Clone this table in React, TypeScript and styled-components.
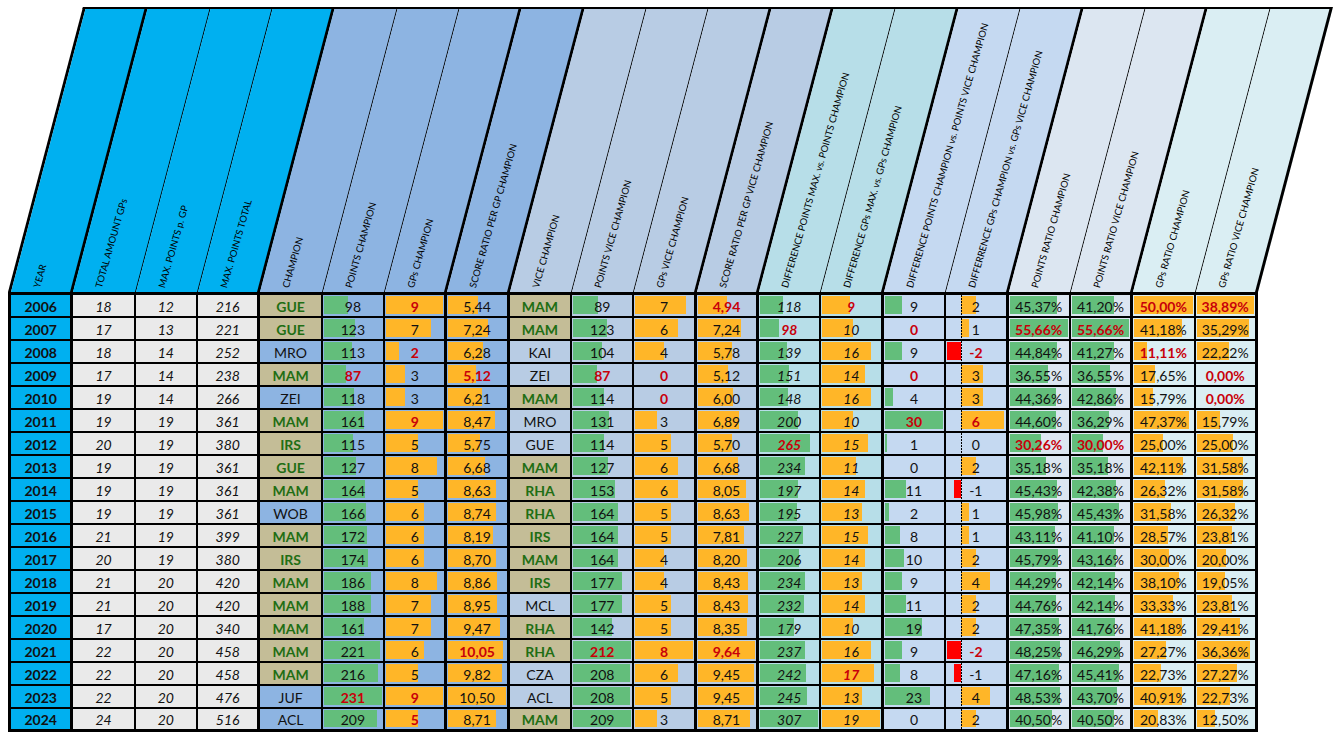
import React from 'react'
import styled, { createGlobalStyle } from 'styled-components'

type Bar = 'green' | 'orange' | 'axis'

interface Column {
  label: string
  head: string
  body: string
  thick?: boolean
  italic?: boolean
  bar?: Bar
}

const BLUE = '#00B0F0'
const CHAMP = '#8DB4E2'
const VICE = '#B8CCE4'
const DIFF = '#B7DEE8'
const DIFF2 = '#C5D9F1'
const RATIO = '#DCE6F1'
const RATIO2 = '#DAEEF3'
const TAN = '#C4BD97'
const GREEN_BAR = '#63BE7B'
const ORANGE_BAR = '#FFB628'

const COLS: Column[] = [
  { label: 'YEAR', head: BLUE, body: BLUE, thick: true },
  { label: 'TOTAL AMOUNT GPs', head: BLUE, body: '#EAEAEA', italic: true },
  { label: 'MAX. POINTS p. GP', head: BLUE, body: '#EAEAEA', italic: true },
  { label: 'MAX. POINTS TOTAL', head: BLUE, body: '#EAEAEA', italic: true, thick: true },
  { label: 'CHAMPION', head: CHAMP, body: CHAMP },
  { label: 'POINTS CHAMPION', head: CHAMP, body: CHAMP, bar: 'green' },
  { label: 'GPs CHAMPION', head: CHAMP, body: CHAMP, bar: 'orange', thick: true },
  { label: 'SCORE RATIO PER GP CHAMPION', head: CHAMP, body: CHAMP, bar: 'orange', thick: true },
  { label: 'VICE CHAMPION', head: VICE, body: VICE },
  { label: 'POINTS VICE CHAMPION', head: VICE, body: VICE, bar: 'green' },
  { label: 'GPs VICE CHAMPION', head: VICE, body: VICE, bar: 'orange', thick: true },
  { label: 'SCORE RATIO PER GP VICE CHAMPION', head: VICE, body: VICE, bar: 'orange', thick: true },
  { label: 'DIFFERENCE POINTS MAX. vs. POINTS CHAMPION', head: DIFF, body: DIFF, bar: 'green', italic: true },
  { label: 'DIFFERENCE GPs MAX. vs. GPs CHAMPION', head: DIFF, body: DIFF, bar: 'orange', italic: true, thick: true },
  { label: 'DIFFERENCE POINTS CHAMPION vs. POINTS VICE CHAMPION', head: DIFF2, body: DIFF2, bar: 'green' },
  { label: 'DIFFERRENCE GPs CHAMPION vs. GPs VICE CHAMPION', head: DIFF2, body: DIFF2, bar: 'axis', thick: true },
  { label: 'POINTS RATIO CHAMPION', head: RATIO, body: RATIO, bar: 'green' },
  { label: 'POINTS RATIO VICE CHAMPION', head: RATIO, body: RATIO, bar: 'green', thick: true },
  { label: 'GPs RATIO CHAMPION', head: RATIO2, body: RATIO2, bar: 'orange' },
  { label: 'GPs RATIO VICE CHAMPION', head: RATIO2, body: RATIO2, bar: 'orange', thick: true },
]

// "*" = highlighted name, "!" = red value
const RAW = `2006|18|12|216|*GUE|98|!9|5,44|*MAM|89|7|!4,94|118|!9|9|2|45,37%|41,20%|!50,00%|!38,89%
2007|17|13|221|*GUE|123|7|7,24|*MAM|123|6|7,24|!98|10|!0|1|!55,66%|!55,66%|41,18%|35,29%
2008|18|14|252|MRO|113|!2|6,28|KAI|104|4|5,78|139|16|9|!-2|44,84%|41,27%|!11,11%|22,22%
2009|17|14|238|*MAM|!87|3|!5,12|ZEI|!87|!0|5,12|151|14|!0|3|36,55%|36,55%|17,65%|!0,00%
2010|19|14|266|ZEI|118|3|6,21|*MAM|114|!0|6,00|148|16|4|3|44,36%|42,86%|15,79%|!0,00%
2011|19|19|361|*MAM|161|!9|8,47|MRO|131|3|6,89|200|10|!30|!6|44,60%|36,29%|47,37%|15,79%
2012|20|19|380|*IRS|115|5|5,75|GUE|114|5|5,70|!265|15|1|0|!30,26%|!30,00%|25,00%|25,00%
2013|19|19|361|*GUE|127|8|6,68|*MAM|127|6|6,68|234|11|0|2|35,18%|35,18%|42,11%|31,58%
2014|19|19|361|*MAM|164|5|8,63|*RHA|153|6|8,05|197|14|11|-1|45,43%|42,38%|26,32%|31,58%
2015|19|19|361|WOB|166|6|8,74|*RHA|164|5|8,63|195|13|2|1|45,98%|45,43%|31,58%|26,32%
2016|21|19|399|*MAM|172|6|8,19|*IRS|164|5|7,81|227|15|8|1|43,11%|41,10%|28,57%|23,81%
2017|20|19|380|*IRS|174|6|8,70|*MAM|164|4|8,20|206|14|10|2|45,79%|43,16%|30,00%|20,00%
2018|21|20|420|*MAM|186|8|8,86|*IRS|177|4|8,43|234|13|9|4|44,29%|42,14%|38,10%|19,05%
2019|21|20|420|*MAM|188|7|8,95|MCL|177|5|8,43|232|14|11|2|44,76%|42,14%|33,33%|23,81%
2020|17|20|340|*MAM|161|7|9,47|*RHA|142|5|8,35|179|10|19|2|47,35%|41,76%|41,18%|29,41%
2021|22|20|458|*MAM|221|6|!10,05|*RHA|!212|!8|!9,64|237|16|9|!-2|48,25%|46,29%|27,27%|36,36%
2022|22|20|458|*MAM|216|5|9,82|CZA|208|6|9,45|242|!17|8|-1|47,16%|45,41%|22,73%|27,27%
2023|22|20|476|JUF|!231|!9|10,50|ACL|208|5|9,45|245|13|23|4|48,53%|43,70%|40,91%|22,73%
2024|24|20|516|ACL|209|!5|8,71|*MAM|209|3|8,71|307|19|0|2|40,50%|40,50%|20,83%|12,50%`

interface Value {
  text: string
  red: boolean
  tan: boolean
  num: number
}

const parse = (s: string): Value => {
  const red = s.startsWith('!')
  const tan = s.startsWith('*')
  const text = s.replace(/^[!*]/, '')
  return { text, red, tan, num: parseFloat(text.replace(',', '.').replace('%', '')) }
}

const ROWS: Value[][] = RAW.split('\n').map(line => line.split('|').map(parse))

const RANGE = COLS.map((_, c) => {
  const nums = ROWS.map(r => r[c].num).filter(n => !isNaN(n))
  return { min: Math.min(0, ...nums), max: Math.max(...nums) }
})

const W = (1250 - 3) / 20
const SKEW = 14.74

const GlobalStyle = createGlobalStyle`
  html, body {
    margin: 0;
    padding: 0;
    background: #fff;
  }
  body {
    font-family: Lato, 'Open Sans', sans-serif;
    color: #111;
  }
`

const Page = styled.div`
  padding: 7px 0 0 8px;
  width: 1250px;
`

const HeaderBand = styled.div`
  display: flex;
  box-sizing: border-box;
  height: 285px;
  width: 1250px;
  border-top: 2px solid #000;
  border-left: 3px solid #000;
  transform: skewX(-${SKEW}deg);
  transform-origin: 0 100%;
`

const HeaderCell = styled.div<{ $bg: string; $thick?: boolean }>`
  box-sizing: border-box;
  flex: none;
  display: flex;
  align-items: flex-end;
  width: ${W}px;
  height: 100%;
  padding: 0 0 3px 30px;
  background: ${p => p.$bg};
  border-right: ${p => (p.$thick ? 3 : 1.3)}px solid #000;
`

const HeaderLabel = styled.span`
  flex: none;
  transform-origin: 0 100%;
  transform: skewX(${SKEW}deg) rotate(-74deg);
  white-space: nowrap;
  font-size: 9.5px;
  line-height: 10px;
  color: #000;
`

const Table = styled.div`
  width: 1250px;
  box-sizing: border-box;
  border-top: 3px solid #000;
  border-left: 3px solid #000;
`

const Row = styled.div<{ $last?: boolean }>`
  display: flex;
  height: 23px;
  box-sizing: border-box;
  border-bottom: ${p => (p.$last ? 3 : 2)}px solid #000;
`

const Cell = styled.div<{
  $bg: string
  $thick?: boolean
  $italic?: boolean
  $bold?: boolean
  $color: string
}>`
  position: relative;
  box-sizing: border-box;
  flex: none;
  width: ${W}px;
  height: 100%;
  background: ${p => p.$bg};
  border-right: ${p => (p.$thick ? 3 : 2)}px solid #000;
  display: flex;
  align-items: flex-end;
  justify-content: center;
  font-size: 14px;
  line-height: 16px;
  font-style: ${p => (p.$italic ? 'italic' : 'normal')};
  font-weight: ${p => (p.$bold ? 700 : 400)};
  color: ${p => p.$color};
`

// data bars lie under the cell value, like Excel's conditional formatting
const DataBar = styled.div<{ $color: string }>`
  position: absolute;
  top: 1px;
  bottom: 2px;
  background: ${p => p.$color};
`

const Axis = styled.div`
  position: absolute;
  top: 0;
  bottom: 0;
  width: 1.5px;
  background: repeating-linear-gradient(to bottom, #000 0 2px, transparent 2px 3px);
`

const CellText = styled.span`
  position: relative;
  padding-bottom: 1px;
`

const BarFill: React.FC<{ kind: Bar; value: number; col: number }> = ({ kind, value, col }) => {
  const inner = W - (COLS[col].thick ? 3 : 2) - 2
  const { min, max } = RANGE[col]
  if (kind === 'axis') {
    const unit = inner / (max - min)
    const axis = 1 + -min * unit
    const len = Math.abs(value) * unit
    return (
      <>
        {value > 0 && <DataBar $color={ORANGE_BAR} style={{ left: axis, width: len }} />}
        {value < 0 && <DataBar $color="#FF0000" style={{ left: axis - len, width: len }} />}
        <Axis style={{ left: axis - 0.75 }} />
      </>
    )
  }
  if (!(value > 0)) return null
  return (
    <DataBar
      $color={kind === 'green' ? GREEN_BAR : ORANGE_BAR}
      style={{ left: 1, width: (value / max) * inner }}
    />
  )
}

const App: React.FC = () => {
  return (
    <Page>
      <GlobalStyle />
      <HeaderBand>
        {COLS.map((col, i) => (
          <HeaderCell key={i} $bg={col.head} $thick={col.thick}>
            <HeaderLabel>{col.label}</HeaderLabel>
          </HeaderCell>
        ))}
      </HeaderBand>
      <Table>
        {ROWS.map((row, r) => (
          <Row key={r} $last={r === ROWS.length - 1}>
            {row.map((v, c) => {
              const col = COLS[c]
              const named = c === 4 || c === 8
              const color = v.red ? '#C8000A' : v.tan ? '#1F6E14' : '#111'
              return (
                <Cell
                  key={c}
                  $bg={v.tan ? TAN : col.body}
                  $thick={col.thick}
                  $italic={col.italic}
                  $bold={c === 0 || v.red || v.tan}
                  $color={color}
                >
                  {col.bar && !named && <BarFill kind={col.bar} value={v.num} col={c} />}
                  <CellText>{v.text}</CellText>
                </Cell>
              )
            })}
          </Row>
        ))}
      </Table>
    </Page>
  )
}

export default App
